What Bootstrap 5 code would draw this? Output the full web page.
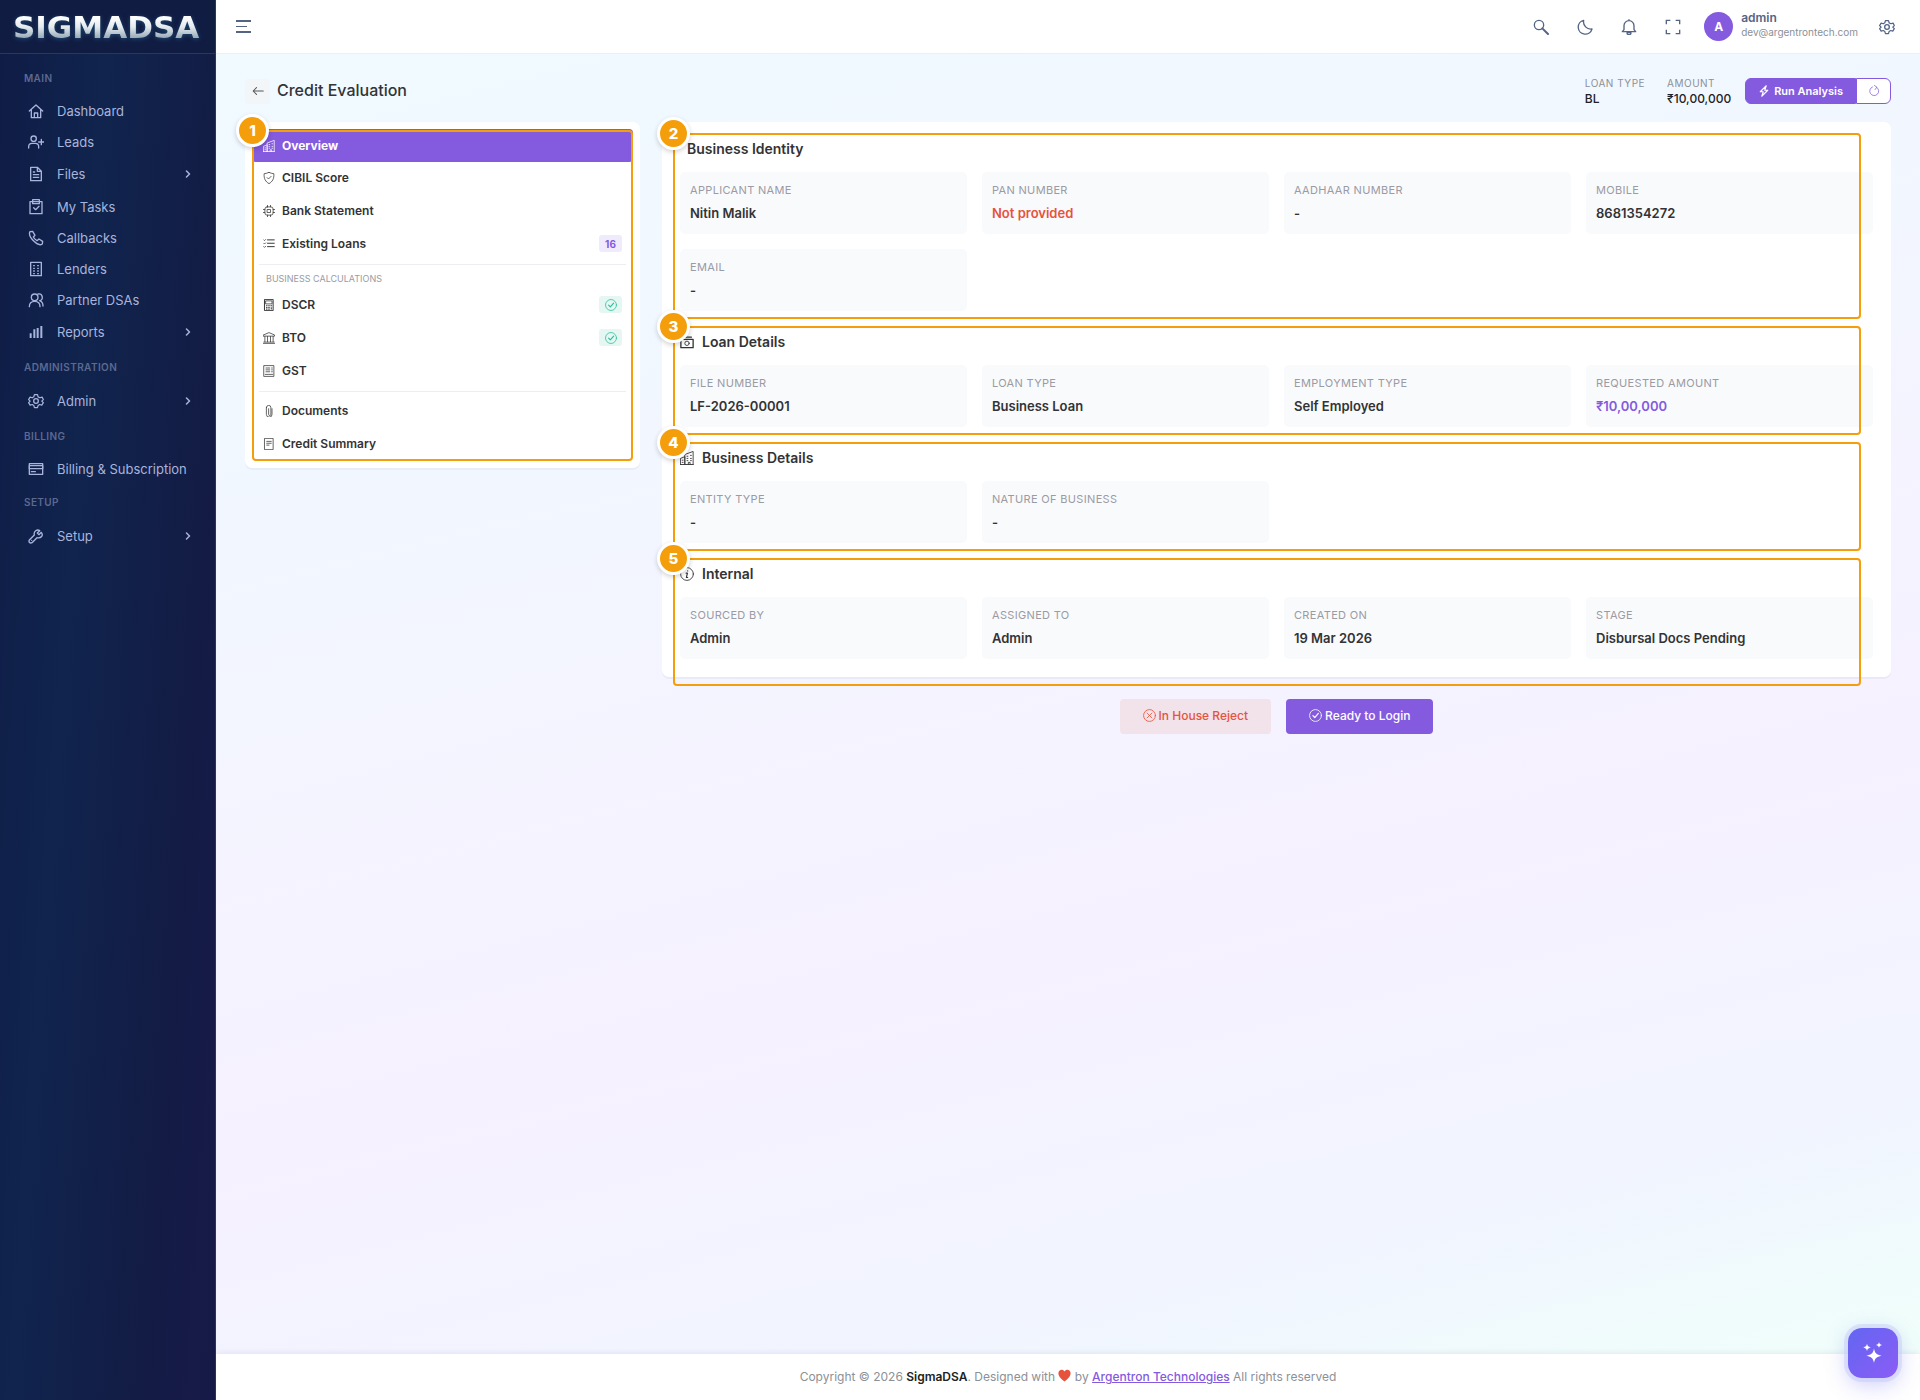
<!DOCTYPE html>
<html lang="en">
<head>
<meta charset="utf-8">
<meta name="viewport" content="width=device-width, initial-scale=1">
<title>Credit Evaluation - SigmaDSA</title>
<link href="https://cdn.jsdelivr.net/npm/bootstrap@5.3.0/dist/css/bootstrap.min.css" rel="stylesheet">
<style>
:root{--brand:#845adf;--ink:#333335;--muted-ink:#9a9ba4;--mark-line:#f59e0b;--head-ink:#536485}
body{font-family:Inter,sans-serif;font-size:13px;line-height:18px;color:var(--ink);background:#fff}
.ico{fill:none;stroke:currentColor;stroke-width:1;stroke-linecap:round;stroke-linejoin:round;flex:none;width:16px;height:16px}
.ico .solid{fill:currentColor;stroke:none}
.ico-sm{width:12px;height:12px}
.ico-md{width:14px;height:14px}

/* sidebar */
.side{width:216px;background:linear-gradient(94deg,#0f1c46 0%,#10244d 35%,#131c45 75%,#171a48 100%);border-right:1px solid #2a3560;color:#a9b4dc}
.brand{height:54px;background:#111c43;border-bottom:1px solid #2a3560;padding-left:13px}
.brand-name{font-family:"DejaVu Sans",sans-serif;font-weight:700;font-size:31px;line-height:40px;color:transparent;background:linear-gradient(#fff 25%,#e4eaee 50%,#9fb0bd 75%);-webkit-background-clip:text;background-clip:text;filter:drop-shadow(0 1px 2px #1d4c74)}
.side-nav{padding-top:6px}
.side-cat{height:35px;padding-left:24px;font-size:10px;font-weight:600;letter-spacing:.04em;color:#5c6990}
.side-link{height:31px;padding:0 23px 0 28px;font-size:13px;color:#a9b4dc;gap:13px;white-space:nowrap}
.side-link.has-sub{height:34px}
.side-link:hover{color:#fff}
.side-link .ico{stroke-width:2}
.side-link .chev{width:8px;height:8px;margin-left:auto}

/* top bar */
.topbar{height:54px;background:#fff;border-bottom:1px solid #ecf0f4;padding:0 11px 0 20px;color:var(--head-ink)}
.burger{width:15px;border:0;background:none;padding:0;gap:4px}
.burger span{display:block;height:2px;background:var(--head-ink)}
.burger span:nth-child(2){width:11px;height:1px}
.tool{width:44px;height:32px;border:0;background:none;padding:0;color:var(--head-ink)}
.tool .ico{stroke-width:2}
.face{width:29px;height:29px;background:var(--brand);font-size:12px;margin-left:9px}
.who{margin:0 7px 0 8px;padding-bottom:4px;line-height:15px}
.who b{font-size:12px;font-weight:600}
.who small{font-size:10px;color:#8c9097}

/* page */
.canvas{background:linear-gradient(166deg,#f0faff 0%,#f2f7ff 28%,#f6f1ff 64%,#f1f5ff 86%,#f0fffa 100%);padding:21px 29px 40px}
.title-row{height:32px;margin-bottom:15px}
.back{width:25px;height:25px;border:0;border-radius:4px;background:#f3f6f8;color:#555;padding:0}
.page-title{font-size:16px;font-weight:500;margin:0;padding-left:7px}
.meta{font-size:12px;line-height:16px;font-weight:500;color:#222}
.meta span{display:block;font-size:10px;font-weight:400;letter-spacing:.05em;color:#8c9097}
.meta-set{gap:22px;margin-right:14px}
.run,.again{height:26px;border:1px solid var(--brand);font-size:11px;font-weight:600;line-height:16px}
.run{background:var(--brand);color:#fff;padding:0 12px;border-radius:6px 0 0 6px}
.again{width:35px;background:#fff;color:var(--brand);border-radius:0 6px 6px 0;padding:0}
.cols{--bs-gutter-x:22px}
.panel{background:#fff;border-radius:7px;box-shadow:0 2px 0 rgba(10,10,60,.04)}
.outline{position:absolute;border:2px solid var(--mark-line);border-radius:4px;pointer-events:none}
.pin{position:absolute;left:-18px;top:-18px;width:33px;height:33px;border-radius:50%;border:3px solid #fff;background:var(--mark-line);color:#fff;font-size:15px;font-weight:800;line-height:27px;text-align:center;box-shadow:0 2px 5px rgba(0,0,0,.18)}

.menu{padding:7px}
.menu-link{height:33px;padding:0 11px 2px;gap:7px;font-size:12px;font-weight:600;color:var(--ink)}
.menu-link.current{background:var(--brand);color:#fff;font-weight:700;border-radius:4px;padding-bottom:0}
.menu-rule{margin:3px 7px;border-top:1px solid #eceef2}
.menu-cat{font-size:9px;line-height:21px;color:var(--muted-ink);padding-left:14px}
.pill{width:23px;height:17px;border-radius:3px;margin-left:auto}
.pill-count{background:#f0ebfc;color:var(--brand);font-size:10px;font-weight:700}
.pill-ok{background:#e6f7f3;color:#26bf94}

.detail{padding:18px}
.block+.block{margin-top:22px}
.block .outline{left:-7px;right:12px;top:-7px;bottom:-8px}
.block:last-child .outline{bottom:-27px}
.menu .outline{inset:1px 0 0 0}
.block-title{font-size:14px;font-weight:600;line-height:18px;margin:0 0 14px;gap:8px}
.bare{padding-left:7px}
.tiles{--bs-gutter-x:15px;--bs-gutter-y:15px;margin-top:-15px}
.tile{height:62px;background:#f9fafc;border-radius:5px;padding:9px 10px;font-weight:600;line-height:22px}
.tile dt{font-size:11px;line-height:18px;margin-bottom:3px;font-weight:400;letter-spacing:.03em;color:var(--muted-ink)}
.tile dd{margin:0;font-size:13px}
.bad{color:#e6533c}.good{color:var(--brand)}

.acts{gap:15px;margin-top:22px}
.act{height:35px;border:0;border-radius:4px;font-size:12px;font-weight:500;padding:0 23px 2px;gap:3px}
.act .ico{width:13px;height:13px}
.act-no{background:#f2e2ea;color:#e6533c}
.act-yes{background:var(--brand);color:#fff}
.foot{height:46px;background:#fff;box-shadow:0 0 7px rgba(20,30,60,.1);font-size:12px;color:#8c9097;position:relative}
.foot strong{color:#222;font-weight:600}
.foot a{color:var(--brand);font-weight:500}
.foot svg{width:13px;height:13px;vertical-align:-1px;fill:#e6533c}
.helper{position:fixed;right:22px;bottom:22px;width:50px;height:50px;border:0;border-radius:14px;color:#fff;background:linear-gradient(135deg,#6366f1,#8b5cf6);box-shadow:0 0 0 4px rgba(199,205,250,.5),0 6px 22px rgba(99,102,241,.35);z-index:5}
.helper svg{width:24px;height:24px;fill:#fff}
</style>
<script src="https://cdn.jsdelivr.net/npm/bootstrap@5.3.0/dist/js/bootstrap.bundle.min.js" defer></script>
</head>
<body>
<svg width="0" height="0" class="position-absolute" aria-hidden="true">
<symbol id="home" viewBox="0 0 24 24"><path d="M2 12 12 3l10 9M5 10v12h14V10M9.500 22v-7h5v7"/></symbol>
<symbol id="leads" viewBox="0 0 24 24"><circle cx="8.500" cy="7" r="4"/><path d="M1 21v-2a5 5 0 0 1 5-5h5a5 5 0 0 1 5 5v2M20 8v8M16 12h8"/></symbol>
<symbol id="file" viewBox="0 0 24 24"><path d="M4 2h10l6 6v14H4zM14 2v6h6M8 9h2M8 13h8M8 17h8"/></symbol>
<symbol id="task" viewBox="0 0 24 24"><path d="M3 4h18v18H3zM8.500 13l3 3 5-5"/><path class="solid" d="M7 1h10v6H7z"/></symbol>
<symbol id="phone" viewBox="0 0 24 24"><path d="M3 2.500 7 2l3.500 6-2.500 2.500a14 14 0 0 0 5.500 5.500l3-2.500 5.500 3.500-.5 4c-3 2-8 .5-12.500-4S1 6 3 2.500z"/></symbol>
<symbol id="bldg" viewBox="0 0 24 24"><path d="M4 2h16v20H4zM8.500 7h1M14.500 7h1M8.500 11h1M14.500 11h1M8.500 15h1M14.500 15h1M8.500 19h1M14.500 19h1"/></symbol>
<symbol id="people" viewBox="0 0 24 24"><circle cx="10" cy="8" r="5"/><path d="M2 22c0-5 3-8 8-8s8 3 8 8M15 3a5 5 0 0 1 2.500 10c3 1 5 4 5 8"/></symbol>
<symbol id="bars" viewBox="0 0 24 24"><path d="M4 21v-7M9.500 21V8M14.500 21V6M20 21V3" stroke-width="3" stroke-linecap="butt"/></symbol>
<symbol id="gear" viewBox="0 0 24 24"><circle cx="12" cy="12" r="3.500"/><path d="M9.500 2h5l1 3.500 3 1.500 3.500-1 2 4-2.500 2.500L24 15l-2.500 4-3.500-1-2.500 1.500-1 3.500h-5l-1-3.500L6 18l-3.500 1L0 15l2.500-2.500L0 10l2.500-4L6 7l2.500-1.500z" transform="translate(.9 .7) scale(.92)"/></symbol>
<symbol id="card" viewBox="0 0 24 24"><path d="M2 4h20v16H2zM5 16h6"/><path class="solid" d="M2 7h20v4.500H2z"/></symbol>
<symbol id="wrench" viewBox="0 0 24 24"><path d="M20 6.500 16.500 10 14 7.500 17.500 4C14 1.500 8 4.500 9.500 10.500L2 18c-1.500 3 1 5.500 4 4l7.500-7.500C19.500 16 23.500 11 20 6.500zM5.500 18.500h.01"/></symbol>
<symbol id="chev" viewBox="0 0 16 16"><path d="m5 2 6 6-6 6" stroke-width="3"/></symbol>
<symbol id="search" viewBox="0 0 24 24"><circle cx="9" cy="9" r="7"/><path d="M14 14l8.500 8.500" stroke-width="3"/></symbol>
<symbol id="moon" viewBox="0 0 24 24"><path d="M10 2a11 11 0 0 0 12.500 13A10.500 10.500 0 1 1 10 2z"/></symbol>
<symbol id="bell" viewBox="0 0 24 24"><path d="M2 19h20l-2.500-3V10a7.500 7.500 0 0 0-15 0v6zM12 2.500V1"/><path class="solid" d="M9 20.500h6a3 3 0 0 1-6 0z"/></symbol>
<symbol id="full" viewBox="0 0 24 24"><path d="M2 8V2h6M16 2h6v6M22 16v6h-6M8 22H2v-6" stroke-linecap="butt" stroke-linejoin="miter"/></symbol>
<symbol id="back" viewBox="0 0 16 16"><path d="M15 8H2M6 3.500 1.500 8 6 12.500" stroke-width="1.400"/></symbol>
<symbol id="bolt" viewBox="0 0 16 16"><path d="M11 1 3 9h4l-2 6 8-8H9z" stroke-width="1.500"/></symbol>
<symbol id="redo" viewBox="0 0 16 16"><path d="M11.500 3A6 6 0 1 1 6 2.500M8.500.5 11.800 3 9.500 6"/></symbol>
<symbol id="city" viewBox="0 0 16 16"><path d="M.5 15.500v-7l5-2v9zM5.500 15.500V4l9.500-3.500v15zM.5 15.500H15M8 6h1M12 5h1M8 8.500h1M12 8.500h1M8 11h1M12 11h1M2.500 10.500h1M2.500 13h1M9.500 15v-2h2v2"/></symbol>
<symbol id="shield" viewBox="0 0 16 16"><path d="M8 .5c2 1 4 1.500 6.500 1.800C15 9 12.500 13 8 15.500 3.500 13 1 9 1.500 2.300 4 2 6 1.500 8 .5zM5.500 7.500 7.300 9.300 10.800 5.800"/></symbol>
<symbol id="chip" viewBox="0 0 16 16"><rect x="2.500" y="2.500" width="11" height="11" rx="3"/><rect x="6" y="6" width="4" height="4"/><path d="M6 .5v2M10 .5v2M6 13.500v2M10 13.500v2M.5 6h2M.5 10h2M13.500 6h2M13.500 10h2"/></symbol>
<symbol id="list" viewBox="0 0 16 16"><path d="M6 2.500h9M6 7h9M6 11.500h9" stroke-width="1.300"/><path d="M1 2.500l1 1L3.500 2M1 7l1 1 1.500-1.500M1 11.500l1 1L3.500 11"/></symbol>
<symbol id="calc" viewBox="0 0 16 16"><path d="M2.500.5h11v15h-11zM4.500 9h1M7.500 9h1M10.500 9h1M4.500 11.500h1M7.500 11.500h1M4.500 13.500h1M7.500 13.500h1M11 11.500v2" stroke-width="1.300"/><path class="solid" d="M4 2.500h8v4H4z"/></symbol>
<symbol id="bank" viewBox="0 0 16 16"><path d="M.5 5.500h15v-1.500L8 .8.5 4zM2.500 6v7M6 6v7M10 6v7M13.500 6v7M1 13.500h14M.3 15.500h15.400"/></symbol>
<symbol id="receipt" viewBox="0 0 16 16"><path d="M1.500.8h13v14.400h-13zM4 4h5M4 6.500h5M4 9h5M11.500 4h1M11.500 6.500h1M11.500 9h1M3 12.500h10"/></symbol>
<symbol id="clip" viewBox="0 0 16 16"><path d="M4.500 3.500a3 3 0 0 1 6 0v9a1.500 1.500 0 0 1-3 0V5M4.500 3.500v9a3.500 3.500 0 0 0 7.500 0V5"/></symbol>
<symbol id="note" viewBox="0 0 16 16"><path d="M2.500.5h11v15h-11zM5 4.500h6M5 7h6M5 9.500h3"/></symbol>
<symbol id="cash" viewBox="0 0 16 16"><path d="M3 2.500h10M1 5h14v9.500H1z" stroke-width="1.500"/><circle class="solid" cx="8" cy="9.500" r="2.500"/></symbol>
<symbol id="info" viewBox="0 0 16 16"><circle cx="8" cy="8" r="7.300"/><path d="M7 7h1.500L7.300 12h1.500M8.800 4.300v.2" stroke-width="1.300"/></symbol>
<symbol id="ok" viewBox="0 0 16 16"><circle cx="8" cy="8" r="7.300"/><path d="m4.800 8.200 2.300 2.300L11.500 5.500" stroke-width="1.500"/></symbol>
<symbol id="no" viewBox="0 0 16 16"><circle cx="8" cy="8" r="7.300"/><path d="m5 5 6 6M11 5l-6 6"/></symbol>
</svg>

<div class="d-flex min-vh-100">
<aside class="side flex-shrink-0">
  <div class="brand d-flex align-items-center"><span class="brand-name">SIGMADSA</span></div>
  <nav class="side-nav d-flex flex-column" aria-label="Main menu">
    <div class="side-cat d-flex align-items-center">MAIN</div>
    <a href="#" class="side-link d-flex align-items-center text-decoration-none"><svg class="ico"><use href="#home"/></svg>Dashboard</a>
    <a href="#" class="side-link d-flex align-items-center text-decoration-none"><svg class="ico"><use href="#leads"/></svg>Leads</a>
    <a href="#" class="side-link has-sub d-flex align-items-center text-decoration-none"><svg class="ico"><use href="#file"/></svg>Files<svg class="ico chev"><use href="#chev"/></svg></a>
    <a href="#" class="side-link d-flex align-items-center text-decoration-none"><svg class="ico"><use href="#task"/></svg>My Tasks</a>
    <a href="#" class="side-link d-flex align-items-center text-decoration-none"><svg class="ico"><use href="#phone"/></svg>Callbacks</a>
    <a href="#" class="side-link d-flex align-items-center text-decoration-none"><svg class="ico"><use href="#bldg"/></svg>Lenders</a>
    <a href="#" class="side-link d-flex align-items-center text-decoration-none"><svg class="ico"><use href="#people"/></svg>Partner DSAs</a>
    <a href="#" class="side-link has-sub d-flex align-items-center text-decoration-none"><svg class="ico"><use href="#bars"/></svg>Reports<svg class="ico chev"><use href="#chev"/></svg></a>
    <div class="side-cat d-flex align-items-center">ADMINISTRATION</div>
    <a href="#" class="side-link has-sub d-flex align-items-center text-decoration-none"><svg class="ico"><use href="#gear"/></svg>Admin<svg class="ico chev"><use href="#chev"/></svg></a>
    <div class="side-cat d-flex align-items-center">BILLING</div>
    <a href="#" class="side-link d-flex align-items-center text-decoration-none"><svg class="ico"><use href="#card"/></svg>Billing &amp; Subscription</a>
    <div class="side-cat d-flex align-items-center">SETUP</div>
    <a href="#" class="side-link has-sub d-flex align-items-center text-decoration-none"><svg class="ico"><use href="#wrench"/></svg>Setup<svg class="ico chev"><use href="#chev"/></svg></a>
  </nav>
</aside>

<div class="d-flex flex-column flex-grow-1">
  <header class="topbar d-flex align-items-center">
    <button class="burger d-flex flex-column me-auto" aria-label="Toggle menu"><span></span><span></span><span></span></button>
    <button class="tool d-flex align-items-center justify-content-center" aria-label="Search"><svg class="ico"><use href="#search"/></svg></button>
    <button class="tool d-flex align-items-center justify-content-center" aria-label="Dark mode"><svg class="ico"><use href="#moon"/></svg></button>
    <button class="tool d-flex align-items-center justify-content-center" aria-label="Notifications"><svg class="ico"><use href="#bell"/></svg></button>
    <button class="tool d-flex align-items-center justify-content-center" aria-label="Full screen"><svg class="ico"><use href="#full"/></svg></button>
    <span class="face rounded-circle text-white fw-bold d-flex align-items-center justify-content-center">A</span>
    <div class="who d-flex flex-column"><b>admin</b><small>dev@argentrontech.com</small></div>
    <button class="tool d-flex align-items-center justify-content-center" aria-label="Settings"><svg class="ico"><use href="#gear"/></svg></button>
  </header>

  <main class="canvas flex-grow-1">
    <div class="title-row d-flex align-items-center">
      <button class="back d-flex align-items-center justify-content-center" aria-label="Back"><svg class="ico ico-sm"><use href="#back"/></svg></button>
      <h1 class="page-title me-auto">Credit Evaluation</h1>
      <div class="meta-set d-flex">
        <div class="meta"><span>LOAN TYPE</span>BL</div>
        <div class="meta"><span>AMOUNT</span>₹10,00,000</div>
      </div>
      <div class="d-flex">
        <button class="run d-flex align-items-center gap-1"><svg class="ico ico-sm"><use href="#bolt"/></svg>Run Analysis</button>
        <button class="again d-flex align-items-center justify-content-center" aria-label="Refresh"><svg class="ico ico-sm"><use href="#redo"/></svg></button>
      </div>
    </div>

    <div class="row cols align-items-start">
      <div class="col-3">
        <div class="panel menu">
          <nav class="position-relative" aria-label="Evaluation sections">
            <a href="#" class="menu-link current d-flex align-items-center text-decoration-none"><svg class="ico ico-sm"><use href="#city"/></svg>Overview</a>
            <a href="#" class="menu-link d-flex align-items-center text-decoration-none"><svg class="ico ico-sm"><use href="#shield"/></svg>CIBIL Score</a>
            <a href="#" class="menu-link d-flex align-items-center text-decoration-none"><svg class="ico ico-sm"><use href="#chip"/></svg>Bank Statement</a>
            <a href="#" class="menu-link d-flex align-items-center text-decoration-none"><svg class="ico ico-sm"><use href="#list"/></svg>Existing Loans<span class="pill pill-count d-flex align-items-center justify-content-center">16</span></a>
            <div class="menu-rule"></div>
            <div class="menu-cat">BUSINESS CALCULATIONS</div>
            <a href="#" class="menu-link d-flex align-items-center text-decoration-none"><svg class="ico ico-sm"><use href="#calc"/></svg>DSCR<span class="pill pill-ok d-flex align-items-center justify-content-center"><svg class="ico ico-sm"><use href="#ok"/></svg></span></a>
            <a href="#" class="menu-link d-flex align-items-center text-decoration-none"><svg class="ico ico-sm"><use href="#bank"/></svg>BTO<span class="pill pill-ok d-flex align-items-center justify-content-center"><svg class="ico ico-sm"><use href="#ok"/></svg></span></a>
            <a href="#" class="menu-link d-flex align-items-center text-decoration-none"><svg class="ico ico-sm"><use href="#receipt"/></svg>GST</a>
            <div class="menu-rule"></div>
            <a href="#" class="menu-link d-flex align-items-center text-decoration-none"><svg class="ico ico-sm"><use href="#clip"/></svg>Documents</a>
            <a href="#" class="menu-link d-flex align-items-center text-decoration-none"><svg class="ico ico-sm"><use href="#note"/></svg>Credit Summary</a>
            <div class="outline"><span class="pin">1</span></div>
          </nav>
        </div>
      </div>

      <div class="col-9">
        <div class="panel detail">
          <section class="block position-relative">
            <h2 class="block-title bare">Business Identity</h2>
            <div class="row row-cols-4 tiles">
              <div class="col"><dl class="tile mb-0"><dt>APPLICANT NAME</dt><dd>Nitin Malik</dd></dl></div>
              <div class="col"><dl class="tile mb-0"><dt>PAN NUMBER</dt><dd class="bad">Not provided</dd></dl></div>
              <div class="col"><dl class="tile mb-0"><dt>AADHAAR NUMBER</dt><dd>-</dd></dl></div>
              <div class="col"><dl class="tile mb-0"><dt>MOBILE</dt><dd>8681354272</dd></dl></div>
              <div class="col"><dl class="tile mb-0"><dt>EMAIL</dt><dd>-</dd></dl></div>
            </div>
            <div class="outline"><span class="pin">2</span></div>
          </section>
          <section class="block position-relative">
            <h2 class="block-title d-flex align-items-center"><svg class="ico ico-md"><use href="#cash"/></svg>Loan Details</h2>
            <div class="row row-cols-4 tiles">
              <div class="col"><dl class="tile mb-0"><dt>FILE NUMBER</dt><dd>LF-2026-00001</dd></dl></div>
              <div class="col"><dl class="tile mb-0"><dt>LOAN TYPE</dt><dd>Business Loan</dd></dl></div>
              <div class="col"><dl class="tile mb-0"><dt>EMPLOYMENT TYPE</dt><dd>Self Employed</dd></dl></div>
              <div class="col"><dl class="tile mb-0"><dt>REQUESTED AMOUNT</dt><dd class="good">₹10,00,000</dd></dl></div>
            </div>
            <div class="outline"><span class="pin">3</span></div>
          </section>
          <section class="block position-relative">
            <h2 class="block-title d-flex align-items-center"><svg class="ico ico-md"><use href="#city"/></svg>Business Details</h2>
            <div class="row row-cols-4 tiles">
              <div class="col"><dl class="tile mb-0"><dt>ENTITY TYPE</dt><dd>-</dd></dl></div>
              <div class="col"><dl class="tile mb-0"><dt>NATURE OF BUSINESS</dt><dd>-</dd></dl></div>
            </div>
            <div class="outline"><span class="pin">4</span></div>
          </section>
          <section class="block position-relative">
            <h2 class="block-title d-flex align-items-center"><svg class="ico ico-md"><use href="#info"/></svg>Internal</h2>
            <div class="row row-cols-4 tiles">
              <div class="col"><dl class="tile mb-0"><dt>SOURCED BY</dt><dd>Admin</dd></dl></div>
              <div class="col"><dl class="tile mb-0"><dt>ASSIGNED TO</dt><dd>Admin</dd></dl></div>
              <div class="col"><dl class="tile mb-0"><dt>CREATED ON</dt><dd>19 Mar 2026</dd></dl></div>
              <div class="col"><dl class="tile mb-0"><dt>STAGE</dt><dd>Disbursal Docs Pending</dd></dl></div>
            </div>
            <div class="outline"><span class="pin">5</span></div>
          </section>
        </div>
        <div class="acts d-flex justify-content-center">
          <button class="act act-no d-flex align-items-center"><svg class="ico"><use href="#no"/></svg>In House Reject</button>
          <button class="act act-yes d-flex align-items-center"><svg class="ico"><use href="#ok"/></svg>Ready to Login</button>
        </div>
      </div>
    </div>
  </main>

  <footer class="foot d-flex align-items-center justify-content-center">
    <span>Copyright © 2026 <strong>SigmaDSA</strong>. Designed with <svg viewBox="0 0 16 16" aria-label="love"><path d="M8 15.500C5 13 .5 9.500.5 5.200.5.500 6-.500 8 3c2-3.500 7.500-2.500 7.500 2.200C15.500 9.500 11 13 8 15.500z"/></svg> by <a href="#">Argentron Technologies</a> All rights reserved</span>
  </footer>
</div>
</div>
<button class="helper d-flex align-items-center justify-content-center p-0" aria-label="Assistant"><svg viewBox="0 0 24 24"><path d="M13 7.500c1 5 2.500 6 7.500 7.200-5 1.200-6.500 2.200-7.500 7.300-1-5.100-2.500-6.100-7.500-7.300 5-1.200 6.500-2.200 7.500-7.200zM6 2.800c.6 2.400 1.200 3 3.700 3.600C7.200 7 6.600 7.600 6 10c-.6-2.400-1.200-3-3.700-3.600C4.800 5.800 5.400 5.200 6 2.800zM18 1c.5 2 1 2.400 3 2.900-2 .5-2.500 1-3 2.900-.5-1.900-1-2.400-3-2.900 2-.5 2.500-.9 3-2.900z"/></svg></button>
</body>
</html>
